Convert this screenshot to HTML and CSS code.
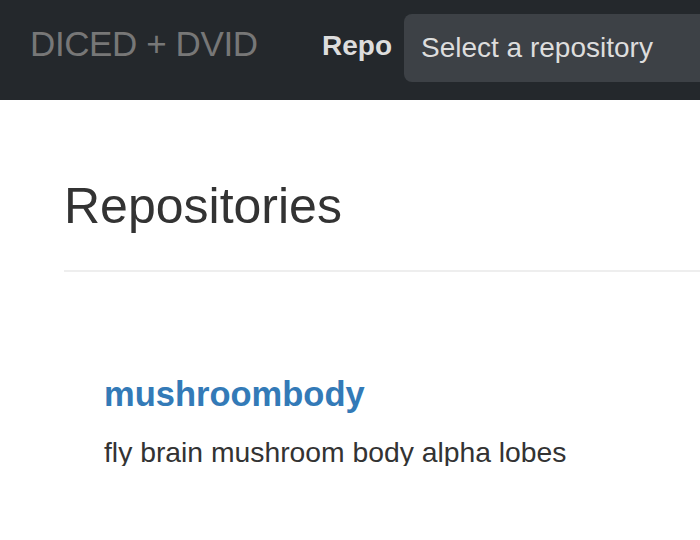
FILE: index.html
```html
<!DOCTYPE html>
<html>
<head>
<meta charset="utf-8">
<title>DICED + DVID</title>
<link rel="stylesheet" href="styles.css">
</head>
<body>
<nav class="navbar">
  <a class="brand" href="#">DICED + DVID</a>
  <label class="repo-label">Repo</label>
  <div class="select">Select a repository</div>
</nav>
<main class="content">
  <h1 class="page-header">Repositories</h1>
  <div class="repo-item">
    <a class="repo-name" href="#">mushroombody</a>
    <p class="repo-desc">fly brain mushroom body alpha lobes</p>
  </div>
</main>
</body>
</html>
```
FILE: styles.css
```css
html, body {
  margin: 0;
  padding: 0;
  background: #fff;
  font-family: "Liberation Sans", Arial, sans-serif;
  color: #333;
}
.navbar {
  height: 100px;
  background: #24282c;
  display: flex;
  align-items: flex-start;
  overflow: hidden;
}
.brand {
  box-sizing: border-box;
  width: 322px;
  flex: none;
  padding: 26px 0 0 30px;
  font-size: 35px;
  line-height: 36px;
  letter-spacing: -0.4px;
  color: #777;
  text-decoration: none;
  white-space: nowrap;
}
.repo-label {
  flex: none;
  margin-top: 32px;
  font-size: 28px;
  line-height: 28px;
  font-weight: bold;
  color: #ddd;
}
.select {
  flex: none;
  box-sizing: border-box;
  margin: 14px 0 0 12px;
  width: 400px;
  height: 68px;
  padding: 0 0 0 17px;
  background: #3d4146;
  border-radius: 8px;
  font-size: 28px;
  line-height: 68px;
  color: #ddd;
  white-space: nowrap;
}
.content {
  padding: 0 0 0 64px;
}
.page-header {
  margin: 81px 0 0 0;
  padding-bottom: 39px;
  font-size: 50px;
  line-height: 50px;
  font-weight: normal;
  color: #333;
  border-bottom: 2px solid #eee;
}
.repo-item {
  padding: 105px 0 0 40px;
}
.repo-name {
  display: block;
  font-size: 34.5px;
  line-height: 35px;
  font-weight: bold;
  color: #337ab7;
  text-decoration: none;
}
.repo-desc {
  margin: 26px 0 0 0;
  font-size: 28.3px;
  line-height: 28px;
  color: #333;
}
```
